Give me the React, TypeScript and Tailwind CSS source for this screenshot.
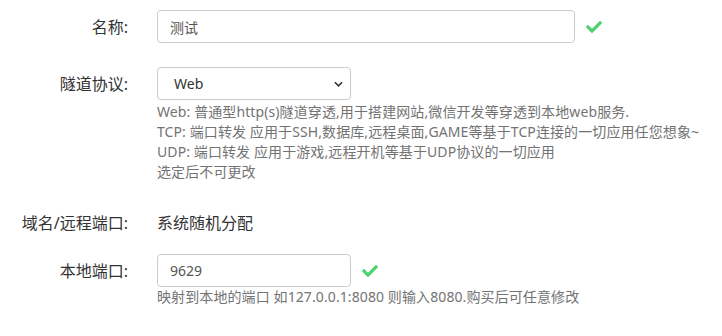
import React from 'react';

const font = { fontFamily: '"Noto Sans", "Noto Sans CJK SC", sans-serif' };

const Check: React.FC = () => (
  <svg viewBox="0 0 512 512" className="h-[16px] w-[16px] fill-[#4fd170]">
    <path d="M173.9 439.4l-166.4-166.4c-10-10-10-26.2 0-36.2l36.2-36.2c10-10 26.2-10 36.2 0L192 312.7 432.1 72.6c10-10 26.2-10 36.2 0l36.2 36.2c10 10 10 26.2 0 36.2l-294.4 294.4c-10 10-26.2 10-36.2 0z" />
  </svg>
);

const Label: React.FC<{ children: React.ReactNode }> = ({ children }) => (
  <div className="w-[130px] shrink-0 pr-[2px] text-right text-[16px] text-[#333]">{children}</div>
);

const App: React.FC = () => {
  return (
    <div className="min-h-[336px] w-[722px] bg-white pt-[10px]" style={font}>
      <div className="flex h-[33px] items-center">
        <Label>名称:</Label>
        <div className="ml-[27px] flex items-center">
          <input
            defaultValue="测试"
            className="h-[33px] w-[418px] rounded-[4px] border border-[#ccc] px-[12px] text-[14px] text-[#555] outline-none"
            style={font}
          />
          <span className="ml-[11px]"><Check /></span>
        </div>
      </div>

      <div className="mt-[24px] flex items-start">
        <div className="flex h-[33px] items-center"><Label>隧道协议:</Label></div>
        <div className="ml-[27px]">
          <div className="relative w-[194px]">
            <select
              className="h-[33px] w-full appearance-none rounded-[4px] border border-[#ccc] bg-white px-[16px] text-[14px] text-[#333] outline-none"
              style={font}
              defaultValue="web"
            >
              <option value="web">Web</option>
              <option value="tcp">TCP</option>
              <option value="udp">UDP</option>
            </select>
            <svg viewBox="0 0 10 6" className="pointer-events-none absolute right-[8px] top-[14px] h-[6px] w-[9px]">
              <path d="M1 1l4 4 4-4" fill="none" stroke="#333" strokeWidth="1.8" />
            </svg>
          </div>
          <div className="mt-[2px] text-[14px] leading-[20px] tracking-[0.1px] text-[#737373]">
            <div>Web: 普通型http(s)隧道穿透,用于搭建网站,微信开发等穿透到本地web服务.</div>
            <div>TCP: 端口转发 应用于SSH,数据库,远程桌面,GAME等基于TCP连接的一切应用任您想象~</div>
            <div>UDP: 端口转发 应用于游戏,远程开机等基于UDP协议的一切应用</div>
            <div>选定后不可更改</div>
          </div>
        </div>
      </div>

      <div className="mt-[24px] flex h-[33px] items-center">
        <Label>域名/远程端口:</Label>
        <div className="ml-[27px] text-[16px] text-[#333]">系统随机分配</div>
      </div>

      <div className="mt-[15px] flex items-start">
        <div className="flex h-[33px] items-center"><Label>本地端口:</Label></div>
        <div className="ml-[27px]">
          <div className="flex items-center">
            <input
              defaultValue="9629"
              className="h-[33px] w-[194px] rounded-[4px] border border-[#ccc] px-[12px] text-[14px] text-[#555] outline-none"
              style={font}
            />
            <span className="ml-[11px]"><Check /></span>
          </div>
          <div className="text-[14px] leading-[20px] tracking-[0.1px] text-[#737373]">
            映射到本地的端口 如127.0.0.1:8080 则输入8080.购买后可任意修改
          </div>
        </div>
      </div>
    </div>
  );
};

export default App;
